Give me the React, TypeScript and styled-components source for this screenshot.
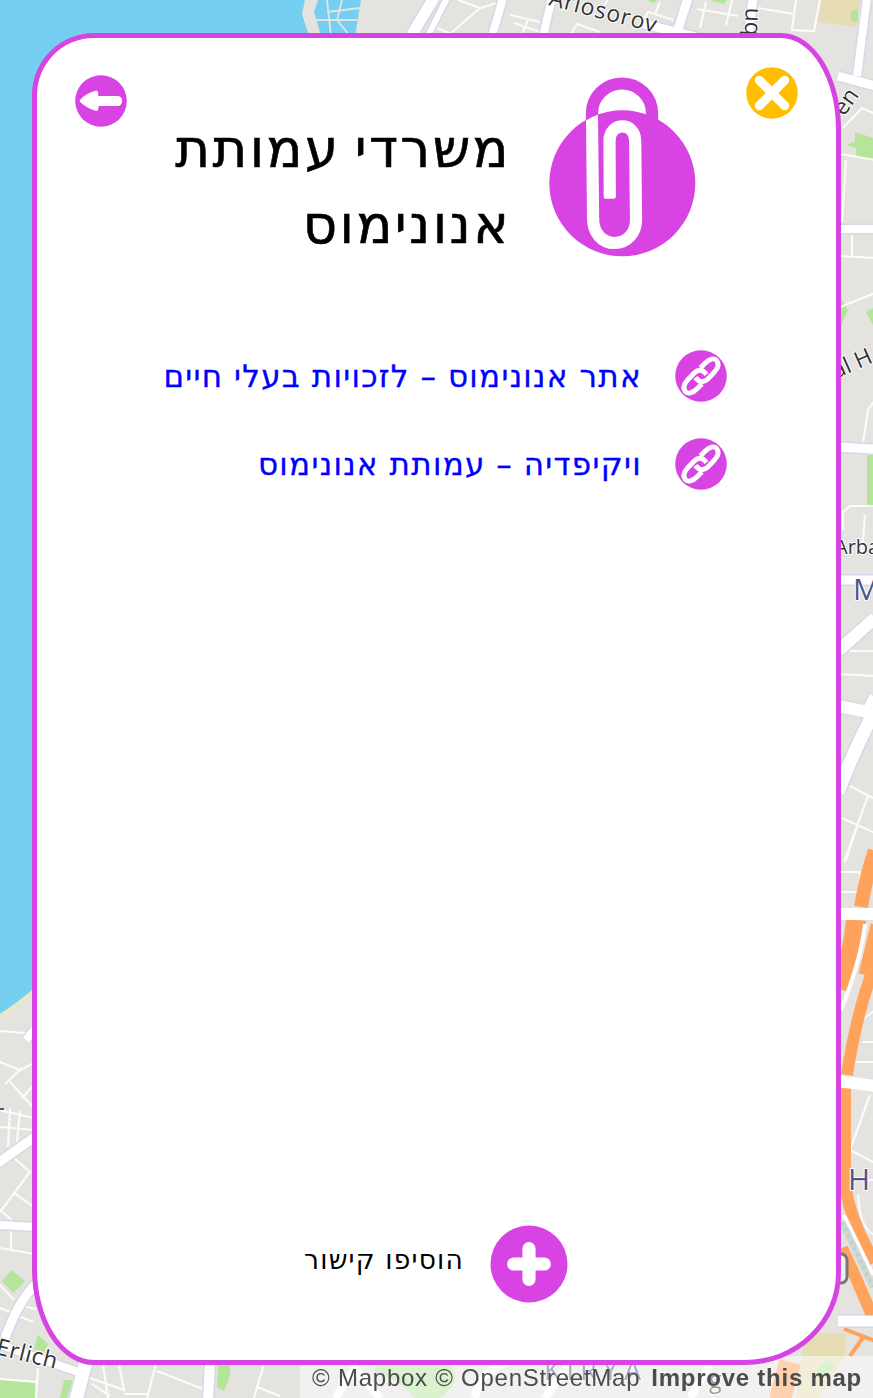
import React from 'react';
import styled, { createGlobalStyle } from 'styled-components';

const PURPLE = '#d843e3';

const GlobalStyle = createGlobalStyle`
  html, body { margin: 0; padding: 0; overflow: hidden; }
  * { box-sizing: border-box; }
`;

const Page = styled.div`
  position: relative;
  display: flex;
  width: 873px;
  height: 1398px;
  padding: 33px 32px 33px;
  background: #e5e3df;
  overflow: hidden;
  font-family: 'DejaVu Sans', sans-serif;
`;

const MapCanvas = styled.svg`
  position: absolute;
  inset: 0;
`;

const Attribution = styled.div`
  position: absolute;
  right: 0;
  bottom: 0;
  width: 573px;
  height: 42px;
  padding: 10px 11px 0 0;
  display: flex;
  justify-content: flex-end;
  gap: 11px;
  background: rgba(255, 255, 255, 0.5);
  color: #4c4c4c;
  font: 24px/24px 'Liberation Sans', sans-serif;
  letter-spacing: 0.75px;
  white-space: nowrap;
  direction: ltr;
  filter: blur(0.6px);
`;

const Panel = styled.main`
  position: relative;
  display: flex;
  flex-direction: column;
  width: 809px;
  height: 1332px;
  border: 5px solid ${PURPLE};
  border-radius: 62px 60px 96px 62px / 62px 96px 92px 96px;
  background: #fff;
`;

const Header = styled.header`
  display: flex;
  align-items: flex-start;
  height: 227px;
  padding: 29px 38px 0 38px;
`;

const IconButton = styled.button<{ $top?: number }>`
  display: block;
  width: 52px;
  height: 52px;
  margin: ${(p) => p.$top ?? 0}px 0 0;
  padding: 0;
  border: 0;
  background: none;
`;

const Heading = styled.div`
  display: flex;
  direction: rtl;
  gap: 38px;
  margin: 0 50px 0 auto;
  padding-top: 10px;
`;

const Title = styled.h1`
  width: 345px;
  margin: 34px 0 0;
  font-size: 53px;
  font-weight: 400;
  letter-spacing: 2.4px;
  word-spacing: -5px;
  line-height: 76px;
  white-space: nowrap;
  color: #000;
  -webkit-text-stroke: 0.6px #000;
`;

const Links = styled.ul`
  display: flex;
  flex-direction: column;
  gap: 36px;
  direction: rtl;
  margin: 85px 109px 0 0;
  padding: 0;
  list-style: none;
`;

const LinkRow = styled.li`
  display: flex;
  align-items: center;
  gap: 33px;
  height: 52px;
`;

const LinkText = styled.a`
  color: #0000ff;
  font-size: 31px;
  letter-spacing: 1.3px;
  word-spacing: -0.5px;
  line-height: 52px;
  white-space: nowrap;
  text-decoration: none;
  -webkit-text-stroke: 0.3px #0000ff;
`;

const Footer = styled.footer`
  display: flex;
  direction: rtl;
  align-items: center;
  gap: 26px;
  height: 78px;
  margin: auto 268px 57px 0;
`;

const AddLabel = styled.span`
  font-size: 26.5px;
  letter-spacing: 1.2px;
  line-height: 36px;
  margin-bottom: 8px;
  white-space: nowrap;
`;

const BackIcon = () => (
  <svg width="52" height="52" viewBox="0 0 52 52">
    <circle cx="26" cy="26" r="25.8" fill={PURPLE} />
    <path
      fill="#fff"
      d="M5 25 Q11 18 21.5 15.6 Q23.5 15.8 23.3 21 H43 Q47 21.500 47 26 Q47 30.500 43 31 H23.600 Q23.500 36 21.500 36 Q12 33.500 5 27 Q4.300 26 5 25Z"
    />
  </svg>
);

const CloseIcon = () => (
  <svg width="52" height="52" viewBox="0 0 52 52">
    <circle cx="26" cy="26" r="25.8" fill="#ffbf00" />
    <path d="M13.300 13.300 L38.700 38.700 M38.700 13.300 L13.300 38.700" stroke="#fff" strokeWidth="9" strokeLinecap="round" />
  </svg>
);

const ClipIcon = () => (
  <svg width="147" height="180" viewBox="549 77 147 180">
    <circle cx="622.3" cy="183.300" r="73" fill={PURPLE} />
    <path
      d="M592 120 V113 A30 29.500 0 0 1 652 113 V124"
      fill="none"
      stroke={PURPLE}
      strokeWidth="12.200"
    />
    <path fill="#fff" d="M586 120.500 Q591 117 598 114.800 L599.200 220 H587Z" />
    <path
      d="M593 218 C593 233 602 243 614.500 243 S636 233 636 220 L635.200 141 C635.200 121.500 609.500 121.500 609.500 141 L609.800 193"
      fill="none"
      stroke="#fff"
      strokeWidth="12.200"
    />
    <path d="M603.700 192 h12.200 v4.500 q0 2.300 -2.500 2.300 h-7 q-2.700 0 -2.700 -2.300z" fill="#fff" />
  </svg>
);

const ChainIcon = () => (
  <svg width="52" height="52" viewBox="0 0 52 52">
    <circle cx="26" cy="26" r="25.800" fill={PURPLE} />
    <g fill="none" stroke="#fff" strokeWidth="4.900">
      <path d="M25.500 18 L30 13.200 C34.500 8.500 39 7.800 41.500 10.300 C44.300 13.500 43.800 17 39.500 22 L32.500 29.200 C28.500 33 24 32.500 20.500 27.500" />
      <path d="M27 34 L22 38.800 C17.500 43.500 13 44.200 10.500 41.700 C7.700 38.500 8.200 35 12.500 30 L19.500 22.800 C23.500 19 28 19.500 31.500 24.500" />
    </g>
  </svg>
);

const PlusIcon = () => (
  <svg width="78" height="78" viewBox="0 0 78 78">
    <circle cx="39" cy="39" r="38.500" fill={PURPLE} />
    <path d="M39 23.700 V54.300 M23.700 39 H54.300" stroke="#fff" strokeWidth="13.200" strokeLinecap="round" />
  </svg>
);

const roads: Array<[string, number]> = [
  ['M434 -2 L411 36', 11],
  ['M447 -2 L428 36', 6],
  ['M503 -2 L492 36', 8],
  ['M552 -2 L543 36', 8],
  ['M688 -2 L676 36', 9],
  ['M753 -2 L748 36', 9],
  ['M640 23 L700 38', 9],
  ['M867 -2 L857 76', 8],
  ['M838 76 L875 86', 9],
  ['M838 229 H875', 8],
  ['M838 447 L875 449', 9],
  ['M838 580 H875', 9],
  ['M838 651 L875 618', 12],
  ['M838 706 L868 712 L875 697', 12],
  ['M875 710 Q854 750 838 792', 13],
  ['M-2 1163 L36 1136', 9],
  ['M-2 1225 L36 1227', 8],
  ['M36 1284 Q19 1300 5 1338', 9],
  ['M26 1040 L34 1030', 8],
  ['M-2 1344 L84 1374', 8],
  ['M86 1362 L76 1400', 13],
  ['M210 1362 L208 1400', 10],
  ['M838 1321 H875', 11],
];

const lanes =
  'M458 0 L480 8 L500 2 M480 8 L450 34 M430 25 L456 36 M510 15 L540 22 M514 23 L540 32 M528 20 L522 34 M570 35 L577 24 L600 32 M608 0 L600 10 M674 20 L648 12 L640 26 M660 2 L655 14 M697 9 L738 16 M706 2 L700 28 M732 0 L726 25 M758 8 L794 14 M796 0 L792 30 L814 31 L820 0 M843 128 L862 108 L875 114 M840 154 L875 160 M846 160 L842 222 M852 232 V256 M838 256 L875 258 M838 308 L875 293 M875 400 L868 410 L863 444 M843 530 V512 L850 506 H873 M865 515 L862 552 M850 651 H875 M838 674 L875 676 M850 786 L875 799 M842 818 L875 833 M868 796 L844 862 M858 824 L846 860 M841 872 H860 V892 H841 M875 1010 L862 1020 M862 1042 H875 M855 1062 H875 M870 1095 L850 1150 L875 1163 M842 1190 L856 1180 L875 1180 M858 1195 Q860 1230 875 1235 M0 1031 L25 1033 M0 1062 L20 1070 L36 1062 M5 1084 L22 1068 M10 1082 L34 1108 M22 1098 L34 1085 M0 1110 L34 1118 M10 1108 L8 1147 M20 1110 L17 1142 M0 1127 L35 1130 M0 1212 L30 1172 L14 1158 M14 1193 L34 1207 M0 1210 L12 1220 M11 1230 V1250 M0 1248 L34 1254 M0 1285 L14 1300 M0 1308 L10 1312 M18 1316 L34 1322 M24 1306 L36 1309 M38 1368 L36 1398 M0 1379 L38 1382 M103 1364 L108 1398 M119 1364 L124 1390 L90 1378 M156 1364 L147 1398 M157 1371 L203 1389 M92 1384 L110 1396 M264 1364 L254 1398 M257 1387 L280 1396 M124 1394 H148';

const MapArt = () => (
  <MapCanvas width="873" height="1398" viewBox="0 0 873 1398">
    <path d="M0 0 H305 L302 14 L309 36 V100 H35 V990 Q18 1005 0 1016Z" fill="#75cff0" />
    <path d="M314 12 L318 0 H361 L355 36 H321Z" fill="#75cff0" />
    <path d="M327 0 L331 36 M342 0 L337 20 L350 36 M314 20 H357 M327 12 L360 8" stroke="#e5e3df" strokeWidth="1.800" fill="none" />
    <path d="M0 1016 Q18 1005 35 990" stroke="#ebe8c8" strokeWidth="4" fill="none" />
    <path d="M819 0 H860 L857 27 L818 22Z" fill="#e6ddb5" />
    <path
      fill="#b4e59b"
      d="M851 11 L858 9 V22 L851 21Z M647 0 H657 L654 3Z M710 0 H727 L724 4Z M846 145 L855 142 V132 L873 138 V160 L856 157 V148Z M841 298 L848 310 L841 326Z M866 312 L873 308 V325Z M867 455 H873 V507 H867Z M2 1281 L12 1270 L25 1281 L13 1293Z M38 1335 L48 1344 L44 1352 L34 1349Z M0 1380 L35 1383 V1398 H0Z M218 1364 H230 V1376 L224 1391 L217 1387Z M64 1380 H73 L67 1398 H60Z"
    />
    <path d="M805 1333 H846 L845 1356 L820 1398 H796Z" fill="#e6ddb5" />
    <path d="M375 1365 H450 Q463 1382 440 1398 H415 Q400 1380 375 1372Z M816 1370 L827 1360 L834 1367 L823 1378Z" fill="#b4e59b" />
    <path d={lanes} fill="none" stroke="#fff" strokeOpacity="0.850" strokeWidth="2.200" />
    <path d="M335 1398 L355 1368 L380 1398 M475 1398 Q480 1365 520 1360 M545 1398 L570 1362 M690 1398 L710 1365" fill="none" stroke="#fff" strokeWidth="8" />
    <g fill="none" strokeLinejoin="round">
      {roads.map(([d, w]) => (
        <path key={'e' + d} d={d} stroke="#d5d8e8" strokeWidth={w + 3} />
      ))}
      <g stroke="#ffa35c">
        <path d="M875 851 Q867 872 861 907" strokeWidth="14" />
        <path d="M856 920 Q853 955 840 989" strokeWidth="20" />
        <path d="M875 965 Q857 1010 847 1075" strokeWidth="12" />
        <path d="M877 925 L865 975" strokeWidth="13" />
        <path d="M845 1088 V1184 Q850 1222 875 1262" strokeWidth="12" />
        <path d="M842 1248 Q855 1275 873 1318" strokeWidth="12" />
        <path d="M844 1329 L875 1341 M864 1336 L850 1356" strokeWidth="4" />
        <path d="M790 1362 L780 1400" strokeWidth="22" />
      </g>
      <path d="M865 924 Q861 960 841 1010 M844 1215 L873 1275" stroke="#fff" strokeWidth="4" />
      <path d="M842 1222 L873 1287" stroke="#d8d6cb" strokeWidth="7" />
      <path d="M842 1222 L873 1287" stroke="#9fd8ee" strokeWidth="3" strokeDasharray="3 4" />
      {roads.map(([d, w]) => (
        <path key={d} d={d} stroke="#fff" strokeWidth={w} />
      ))}
      <path d="M838 914 H875 M838 1081 L875 1086" stroke="#fff" strokeWidth="12" />
      <rect x="820" y="1254" width="27" height="29" rx="6" fill="#eee" stroke="#777" strokeWidth="3" />
    </g>
    <g fontFamily="'Open Sans', sans-serif" fontSize="23" fill="#333" stroke="#fff" strokeWidth="2" paintOrder="stroke">
      <text transform="translate(548 5) rotate(14.500)" textLength="110">Arlosorov</text>
      <text transform="translate(757 36) rotate(-88)">bn</text>
      <text transform="translate(844 117) rotate(-55)">en</text>
      <text transform="translate(836 379) rotate(-24)">al H</text>
      <text x="835" y="554" fontSize="20">Arba</text>
      <text transform="translate(-5 1354) rotate(14)" textLength="62">Erlich</text>
      <text x="709" y="1388">g</text>
      <g fill="#4e568b" fontSize="30">
        <text x="853" y="600">M</text>
        <text x="848" y="1190">H</text>
        <text x="544" y="1380" fontSize="27" textLength="97">KIRYA</text>
      </g>
    </g>
    <path d="M0 1109 H4" stroke="#4e568b" strokeWidth="2" />
  </MapCanvas>
);

const items = ['אתר אנונימוס – לזכויות בעלי חיים', 'ויקיפדיה – עמותת אנונימוס'];

export default function App() {
  return (
    <Page>
      <GlobalStyle />
      <MapArt />
      <Attribution>
        <span>© Mapbox © OpenStreetMap</span>
        <b>Improve this map</b>
      </Attribution>
      <Panel>
        <Header>
          <IconButton $top={8} aria-label="חזרה"><BackIcon /></IconButton>
          <Heading>
            <ClipIcon />
            <Title>משרדי עמותת<br />אנונימוס</Title>
          </Heading>
          <IconButton aria-label="סגירה"><CloseIcon /></IconButton>
        </Header>
        <Links>
          {items.map((label) => (
            <LinkRow key={label}>
              <ChainIcon />
              <LinkText href="#">{label}</LinkText>
            </LinkRow>
          ))}
        </Links>
        <Footer>
          <PlusIcon />
          <AddLabel>הוסיפו קישור</AddLabel>
        </Footer>
      </Panel>
    </Page>
  );
}
